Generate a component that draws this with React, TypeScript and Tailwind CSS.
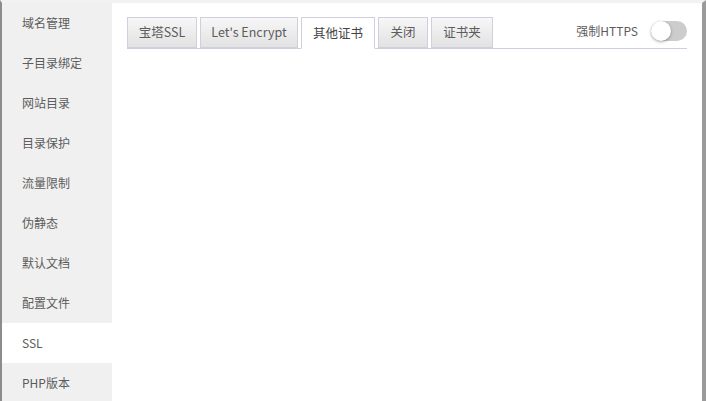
import React, { useState } from "react"

const menu = ["域名管理", "子目录绑定", "网站目录", "目录保护", "流量限制", "伪静态", "默认文档", "配置文件", "SSL", "PHP版本"]
const tabs = [
  { label: "宝塔SSL", w: "w-[70px]" },
  { label: "Let's Encrypt", w: "w-[98px]" },
  { label: "其他证书", w: "w-[74px]" },
  { label: "关闭", w: "w-[50px]" },
  { label: "证书夹", w: "w-[62px]" },
]

export default function App() {
  const [active, setActive] = useState(8)
  const [tab, setTab] = useState(2)
  const [https, setHttps] = useState(false)

  return (
    <div
      className="flex h-[401px] w-[706px] overflow-hidden border-l-2 border-r-4 border-t-[3px] border-l-[#8c8c8c] border-r-[#9a9a9a] border-t-[#f2f2f2] bg-white text-[12px] text-[#5c5c5c]"
      style={{ fontFamily: '"Noto Sans CJK SC", "Liberation Sans", sans-serif' }}
    >
      <ul className="w-[110px] shrink-0 bg-[#f0f0f0]">
        {menu.map((m, i) => (
          <li
            key={m}
            onClick={() => setActive(i)}
            className={`flex h-10 cursor-pointer items-center pl-5 ${i === active ? "bg-white" : ""}`}
          >
            {m}
          </li>
        ))}
      </ul>

      <div className="flex-1 pl-[15px] pr-[15px] pt-[15px]">
        <div className="flex h-[31px] items-end border-b border-[#cfcfdd]">
          {tabs.map((t, i) => (
            <button
              key={t.label}
              onClick={() => setTab(i)}
              className={`mr-[3px] flex h-[31px] items-center justify-center border border-[#cfcfdd] text-[12.5px] ${t.w} ${
                i === tab
                  ? "-mb-px h-[32px] border-b-white bg-white text-[#444]"
                  : "bg-gradient-to-b from-[#f7f7f7] to-[#e2e2e2] text-[#5c5c5c]"
              }`}
            >
              {t.label}
            </button>
          ))}
          <div className="ml-auto flex h-full items-center gap-[13px] self-start pb-[4px]">
            <span className="text-[12px] text-[#5c5c5c]">强制HTTPS</span>
            <button
              onClick={() => setHttps(!https)}
              className={`relative h-[20px] w-[36px] rounded-full ${https ? "bg-[#20a53a]" : "bg-[#cccccc]"}`}
            >
              <span
                className={`absolute top-0 h-[20px] w-[20px] rounded-full bg-white shadow-[0_1px_3px_rgba(0,0,0,0.35)] ${
                  https ? "left-[16px]" : "left-0"
                }`}
              />
            </button>
          </div>
        </div>
      </div>
    </div>
  )
}
